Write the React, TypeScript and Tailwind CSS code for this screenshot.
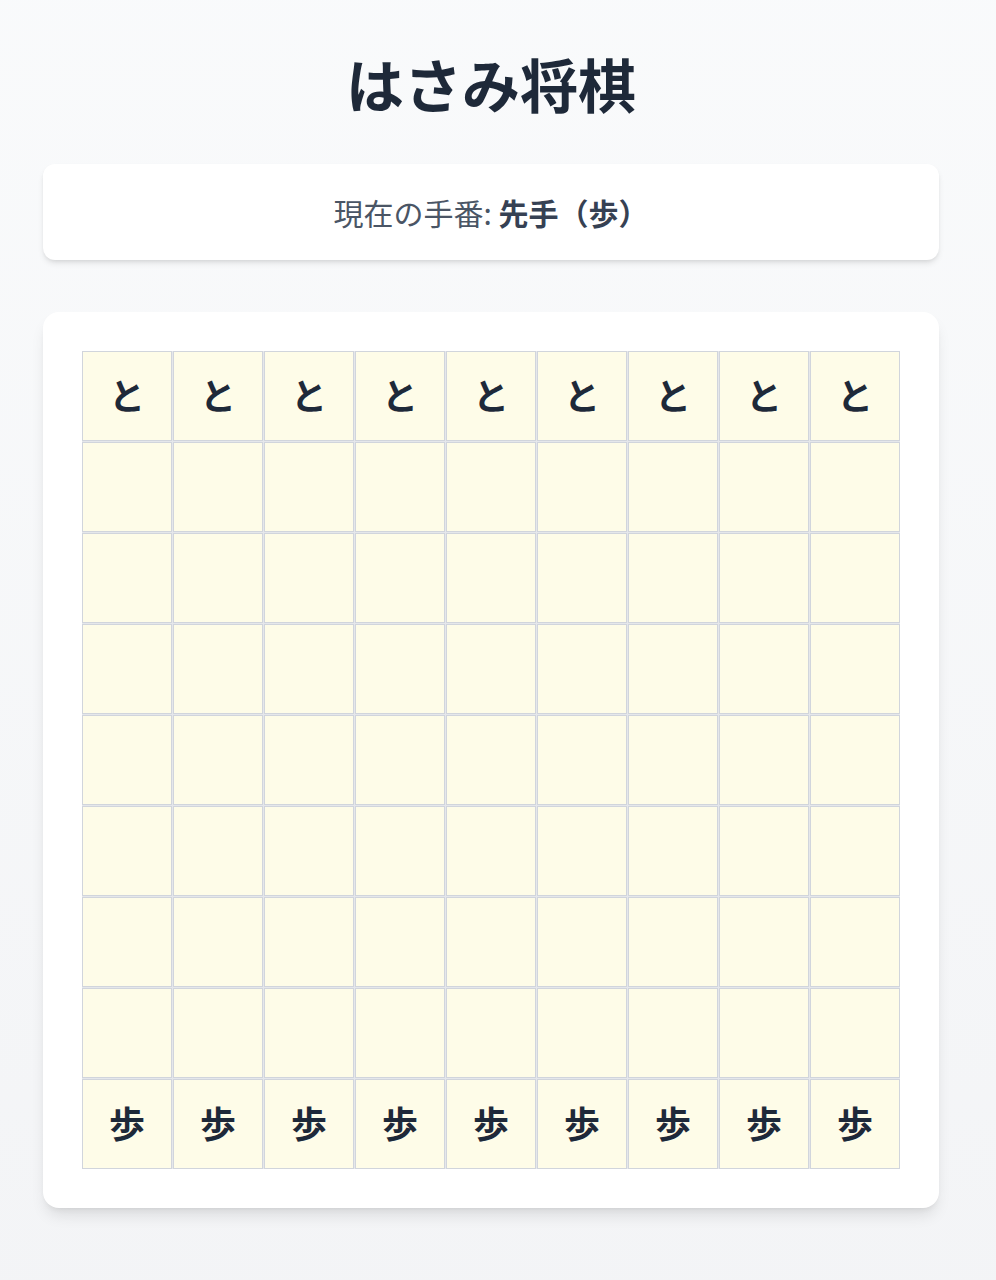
const initialBoard = (): string[][] =>
  Array.from({ length: 9 }, (_, r) =>
    Array.from({ length: 9 }, () => (r === 0 ? "と" : r === 8 ? "歩" : ""))
  )

export default function App() {
  const board = initialBoard()

  return (
    <div
      className="min-h-screen bg-gradient-to-b from-gray-50 to-gray-100 pl-4 pr-[30px] pt-[54px] pb-28"
      style={{ fontFamily: '"Noto Sans CJK JP", "Noto Sans", sans-serif' }}
    >
      <div className="mx-auto max-w-4xl">
        <h1 className="text-center text-[58px] leading-none font-bold text-gray-800">はさみ将棋</h1>

        <div className="mt-[52px] rounded-xl bg-white shadow-md h-24 flex items-center justify-center">
          <p className="text-[30px] text-gray-600">
            現在の手番: <span className="font-bold text-gray-700">先手（歩）</span>
          </p>
        </div>

        <div className="mt-[52px] rounded-2xl bg-white shadow-lg p-[39px]">
          <div className="grid grid-cols-9 gap-px bg-gray-200">
            {board.map((row, r) =>
              row.map((piece, c) => (
                <div
                  key={`${r}-${c}`}
                  className="aspect-square border border-gray-300 bg-yellow-50 flex items-center justify-center pb-[5px] text-4xl font-bold text-gray-800"
                >
                  {piece}
                </div>
              ))
            )}
          </div>
        </div>
      </div>
    </div>
  )
}
